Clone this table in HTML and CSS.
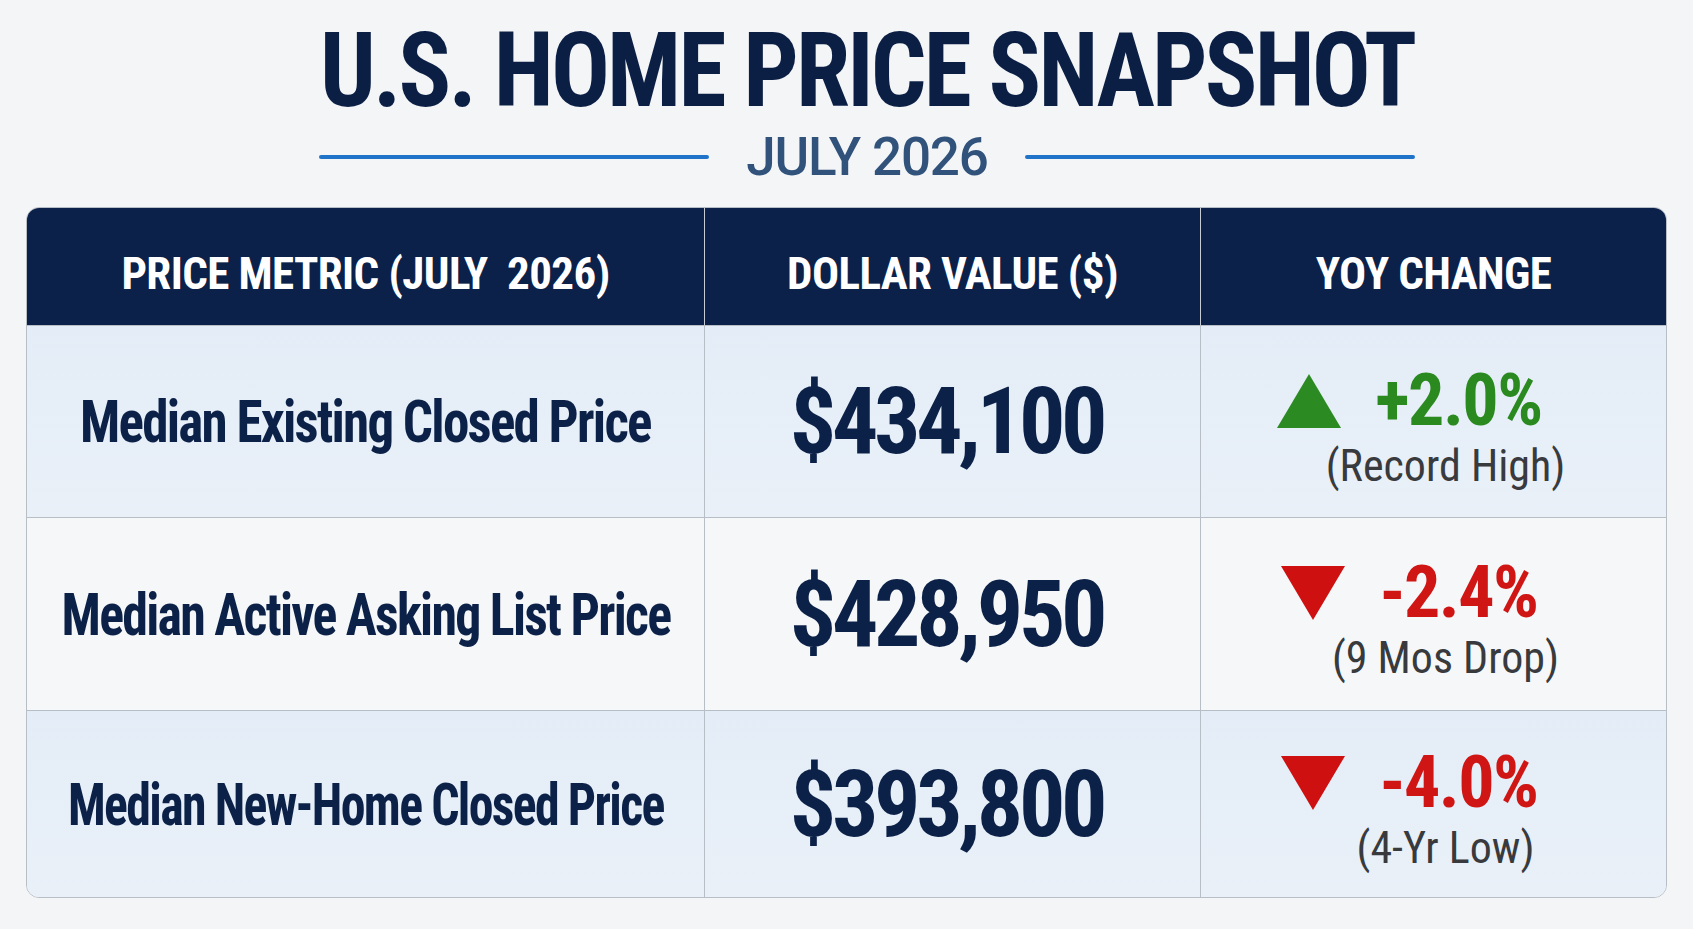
FILE: index.html
```html
<!DOCTYPE html>
<html lang="en">
<head>
<meta charset="utf-8">
<title>U.S. Home Price Snapshot</title>
<link rel="stylesheet" href="styles.css">
</head>
<body>
<header class="hero">
  <h1 class="title">U.S. HOME PRICE SNAPSHOT</h1>
  <div class="subtitle">
    <span class="rule"></span>
    <span class="date">JULY 2026</span>
    <span class="rule"></span>
  </div>
</header>

<section class="table">
  <div class="cell head">PRICE METRIC (JULY&nbsp; 2026)</div>
  <div class="cell head">DOLLAR VALUE ($)</div>
  <div class="cell head last">YOY CHANGE</div>

  <div class="cell label r1"><span class="label-text">Median Existing Closed Price</span></div>
  <div class="cell money r1">$434,100</div>
  <div class="cell change r1 last">
    <div class="chg-top">
      <svg class="tri" viewBox="0 0 64 54" aria-hidden="true"><polygon points="32,0 64,54 0,54" fill="#2b8a22"/></svg>
      <span class="pct up">+2.0%</span>
    </div>
    <div class="note">(Record High)</div>
  </div>

  <div class="cell label r2"><span class="label-text">Median Active Asking List Price</span></div>
  <div class="cell money r2">$428,950</div>
  <div class="cell change r2 last">
    <div class="chg-top">
      <svg class="tri" viewBox="0 0 64 54" aria-hidden="true"><polygon points="0,0 64,0 32,54" fill="#cf1010"/></svg>
      <span class="pct down">-2.4%</span>
    </div>
    <div class="note">(9 Mos Drop)</div>
  </div>

  <div class="cell label r3"><span class="label-text">Median New-Home Closed Price</span></div>
  <div class="cell money r3">$393,800</div>
  <div class="cell change r3 last">
    <div class="chg-top">
      <svg class="tri" viewBox="0 0 64 54" aria-hidden="true"><polygon points="0,0 64,0 32,54" fill="#cf1010"/></svg>
      <span class="pct down">-4.0%</span>
    </div>
    <div class="note">(4-Yr Low)</div>
  </div>
</section>
</body>
</html>
```
FILE: styles.css
```css
* { box-sizing: border-box; }

html, body {
  margin: 0;
  padding: 0;
}

body {
  width: 1693px;
  height: 929px;
  overflow: hidden;
  background: #f4f5f7;
  font-family: "Roboto Condensed", Roboto, "Liberation Sans", sans-serif;
  color: #0c2148;
}

.hero {
  display: flex;
  flex-direction: column;
  align-items: center;
  padding-left: 41px;
}

.title {
  margin: 19px 0 0;
  font-size: 104px;
  line-height: 104px;
  font-weight: 700;
  letter-spacing: -3px;
  color: #0b1f45;
  white-space: nowrap;
  transform: scaleX(0.94);
}

.subtitle {
  display: flex;
  align-items: center;
  gap: 37px;
  height: 60px;
  margin-top: 4px;
}

.rule {
  display: block;
  width: 390px;
  height: 4px;
  background: #1f74c9;
  border-radius: 2px;
}

.date {
  font-family: Roboto, "Liberation Sans", sans-serif;
  font-weight: 500;
  font-size: 53px;
  line-height: 60px;
  color: #30527b;
  letter-spacing: -1.2px;
}

.table {
  display: grid;
  grid-template-columns: 678px 496px 1fr;
  grid-template-rows: 117px 192px 193px 1fr;
  margin: 20px 26px 0;
  height: 691px;
  border: 1.5px solid #b8bec6;
  border-radius: 13px;
  overflow: hidden;
  background: #f6f7f9;
}

.cell {
  display: flex;
  align-items: center;
  justify-content: center;
  border-right: 1.5px solid #b8bec6;
  border-top: 1.5px solid #b8bec6;
  white-space: nowrap;
}

.cell.last { border-right: none; }

.head {
  border-top: none;
  background: #0c2149;
  color: #ffffff;
  font-weight: 700;
  font-size: 45px;
  letter-spacing: -0.6px;
  padding-top: 13px;
  border-right-color: #c5cbd3;
}

.r1, .r3 { background: linear-gradient(180deg, #e4edf7 0%, #e9f0f8 100%); }
.r2 { background: #f6f7f8; }

.label {
  font-weight: 700;
  font-size: 60px;
  letter-spacing: -2px;
  color: #0c2148;
}

.label-text {
  display: inline-block;
  transform: scaleX(0.885);
}

.r2 .label-text { transform: scaleX(0.865); }
.r3 .label-text { transform: scaleX(0.83); }

.money {
  font-weight: 700;
  font-size: 92px;
  letter-spacing: -4.3px;
  color: #0c2148;
  padding-right: 12px;
}

.change {
  flex-direction: column;
  padding-top: 10px;
}

.chg-top {
  display: flex;
  align-items: center;
  gap: 34px;
  margin-right: 48px;
}

.tri {
  width: 64px;
  height: 54px;
  display: block;
}

.pct {
  font-weight: 700;
  font-size: 72px;
  line-height: 72px;
  letter-spacing: -1.5px;
}

.pct.up { color: #2a8a1f; }
.pct.down { color: #d01515; }

.note {
  margin-top: 6px;
  margin-left: 24px;
  font-size: 44px;
  line-height: 46px;
  color: #383a3d;
  font-weight: 400;
}
```
